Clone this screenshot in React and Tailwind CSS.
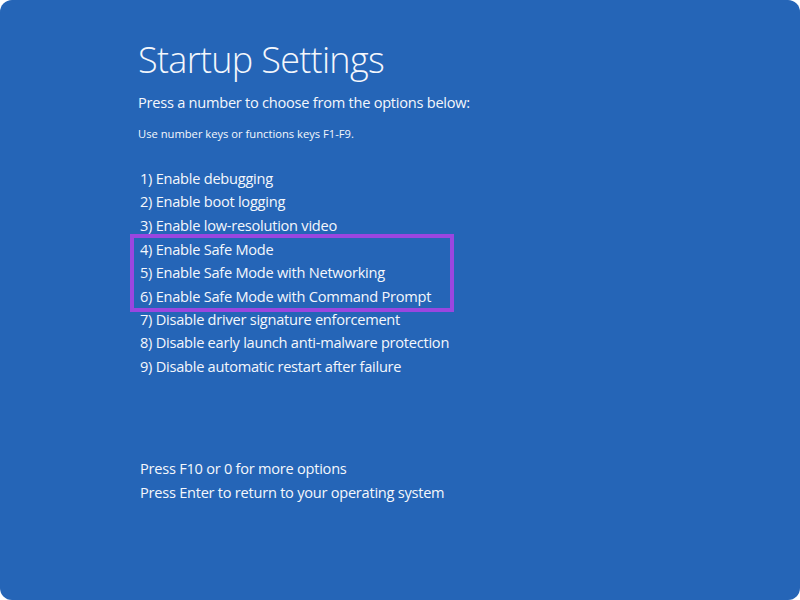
const OPTIONS = [
    "1) Enable debugging",
    "2) Enable boot logging",
    "3) Enable low-resolution video",
];

const SAFE_OPTIONS = [
    "4) Enable Safe Mode",
    "5) Enable Safe Mode with Networking",
    "6) Enable Safe Mode with Command Prompt",
];

const MORE_OPTIONS = [
    "7) Disable driver signature enforcement",
    "8) Disable early launch anti-malware protection",
    "9) Disable automatic restart after failure",
];

export default function App() {
    return (
        <div className="w-[800px] h-[600px] bg-white">
            <div
                className="h-full rounded-[12px] bg-[#2565b7] text-[#f4f7fc] pl-[138px] pt-[36px]"
                style={{ fontFamily: '"Open Sans", "Noto Sans", sans-serif' }}
            >
                <h1 className="text-[36px] font-light leading-[48px] tracking-[-0.7px]">Startup Settings</h1>
                <p className="mt-[7px] text-[14.6px] leading-[22px] tracking-[-0.25px]">Press a number to choose from the options below:</p>
                <p className="mt-[13px] text-[11.2px] leading-[16px]">Use number keys or functions keys F1-F9.</p>

                <div className="mt-[25px] text-[14.6px] leading-[23.4px] tracking-[-0.25px]">
                    {OPTIONS.map(o => (
                        <div key={o} className="pl-[2px]">{o}</div>
                    ))}
                    {/* Highlighted safe mode options */}
                    <div className="-ml-[8px] -mt-[3.5px] -mb-[4px] w-[324px] whitespace-nowrap border-[4px] border-[#9a46e0] pl-[6px]">
                        {SAFE_OPTIONS.map(o => (
                            <div key={o}>{o}</div>
                        ))}
                    </div>
                    {MORE_OPTIONS.map(o => (
                        <div key={o} className="pl-[2px]">{o}</div>
                    ))}
                </div>

                <div className="mt-[78px] text-[14.6px] leading-[24px] tracking-[-0.25px]">
                    <div className="pl-[2px]">Press F10 or 0 for more options</div>
                    <div className="pl-[2px]">Press Enter to return to your operating system</div>
                </div>
            </div>
        </div>
    );
}
